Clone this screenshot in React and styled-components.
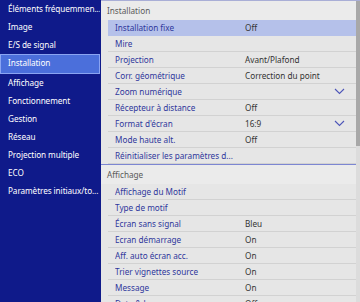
import React from 'react'
import styled, { createGlobalStyle } from 'styled-components';

// labels shortened the way the projector menu shows them
const menu = [
  'Éléments fréquemmen...',
  'Image',
  'E/S de signal',
  'Installation',
  'Affichage',
  'Fonctionnement',
  'Gestion',
  'Réseau',
  'Projection multiple',
  'ECO',
  'Paramètres initiaux/to...',
];

const sections = [
  {
    title: 'Installation',
    rows: [
      { label: 'Installation fixe', value: 'Off', active: true },
      { label: 'Mire' },
      { label: 'Projection', value: 'Avant/Plafond' },
      { label: 'Corr. géométrique', value: 'Correction du point' },
      { label: 'Zoom numérique', chevron: true },
      { label: 'Récepteur à distance', value: 'Off' },
      { label: "Format d'écran", value: '16:9', chevron: true },
      { label: 'Mode haute alt.', value: 'Off' },
      { label: 'Réinitialiser les paramètres d...' },
    ],
  },
  {
    title: 'Affichage',
    rows: [
      { label: 'Affichage du Motif' },
      { label: 'Type de motif' },
      { label: 'Écran sans signal', value: 'Bleu' },
      { label: 'Ecran démarrage', value: 'On' },
      { label: 'Aff. auto écran acc.', value: 'On' },
      { label: 'Trier vignettes source', value: 'On' },
      { label: 'Message', value: 'On' },
      { label: 'Date & heure', value: 'Off' },
    ],
  },
];

const Chevron = () => (
  <svg width="11" height="7" viewBox="0 0 11 7">
    <path d="M1 1 L5.5 5.5 L10 1" fill="none" stroke="#4d55b8" strokeWidth="1.1" />
  </svg>
);

const App = () => {
  return (
    <Screen>
      <GlobalStyle />
      <Sidebar>
        {menu.map((item) => (
          <MenuItem key={item} $selected={item === 'Installation'}>{item}</MenuItem>
        ))}
      </Sidebar>
      <Panel>
        <List>
          {sections.map((section, i) => (
            <Section key={section.title} $first={i === 0}>
              <SectionTitle>{section.title}</SectionTitle>
              {section.rows.map((row) => (
                <Row key={row.label} $active={row.active}>
                  <Label>{row.label}</Label>
                  <Value>{row.value}</Value>
                  {row.chevron && <ChevronBox><Chevron /></ChevronBox>}
                </Row>
              ))}
            </Section>
          ))}
        </List>
        <Scrollbar>
          <Thumb />
        </Scrollbar>
      </Panel>
    </Screen>
  )
}

export default App

const GlobalStyle = createGlobalStyle`
  body {
    margin: 0;
    font-family: "Noto Sans", "Open Sans", sans-serif;
  }
`;
const Screen = styled.div`
  display: flex;
  width: 360px;
  height: 302px;
  overflow: hidden;
  background: #0f1a8a;
`;
const Sidebar = styled.div`
  width: 100px;
  flex-shrink: 0;
  background: #0f1a8a;
  display: flex;
  flex-direction: column;
`;
const MenuItem = styled.div`
  height: 18px;
  line-height: ${p => p.$selected ? '16px' : '18px'};
  padding-left: ${p => p.$selected ? '7px' : '8px'};
  font-size: 8.2px;
  letter-spacing: -0.08px;
  color: #ffffff;
  white-space: nowrap;
  overflow: hidden;
  background: ${p => p.$selected ? '#4b6fdb' : 'transparent'};
  border: ${p => p.$selected ? '1px solid #8aa4f2' : 'none'};
`;
const Panel = styled.div`
  flex: 1;
  display: flex;
  margin-left: 1px;
  background: #e6e6e6;
  border-top: 1px solid #a9aed6;
`;
const List = styled.div`
  flex: 1;
  min-width: 0;
`;
const Section = styled.div`
  border-top: ${p => p.$first ? 'none' : '1px solid #7c86d2'};
`;
const SectionTitle = styled.div`
  height: 19px;
  line-height: 19px;
  padding-left: 6px;
  font-size: 8.2px;
  color: #5a5a5a;
  background: #ebebeb;
`;
const Row = styled.div`
  display: flex;
  align-items: center;
  height: 15px;
  margin-left: 7px;
  padding-left: 7px;
  border-bottom: 1px solid ${p => p.$active ? '#b5c1ea' : '#d2d2d2'};
  background: ${p => p.$active ? '#b5c1ea' : '#e6e6e6'};
  font-size: 8.2px;
`;
const Label = styled.div`
  width: 124px;
  margin-right: 6px;
  flex-shrink: 0;
  color: #2f379c;
  white-space: nowrap;
  overflow: hidden;
`;
const Value = styled.div`
  flex: 1;
  color: #333333;
  white-space: nowrap;
`;
const ChevronBox = styled.div`
  width: 22px;
  display: flex;
  align-items: center;
`;
const Scrollbar = styled.div`
  width: 4px;
  flex-shrink: 0;
  background: #dcdcdc;
`;
const Thumb = styled.div`
  height: 145px;
  background: #a8a8a8;
`;
